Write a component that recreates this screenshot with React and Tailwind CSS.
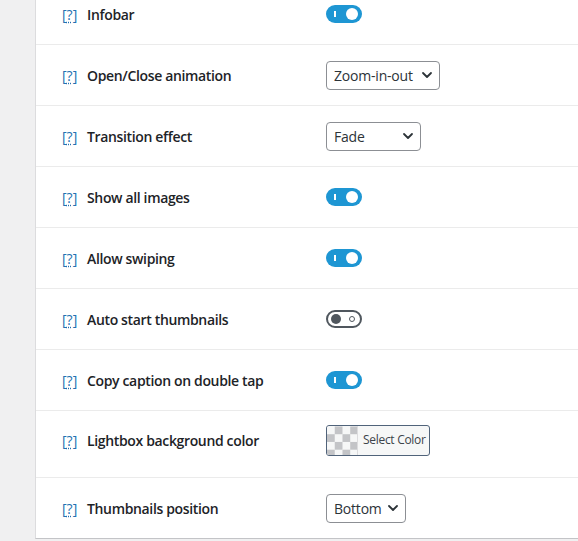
import { useState } from "react";

const font = { fontFamily: '"Open Sans", "Noto Sans", sans-serif' };

function Help() {
  return (
    <span className="text-[#2271b1] text-[14px] w-[25px] shrink-0">
      [<span className="underline decoration-dotted underline-offset-2">?</span>]
    </span>
  );
}

function Toggle({ on }) {
  if (on) {
    return (
      <div className="relative w-[36px] h-[18px] rounded-full bg-[#1e96d3]">
        <span className="absolute left-[8px] top-[6px] w-[2px] h-[6px] bg-white"></span>
        <span className="absolute right-[4px] top-[3px] w-[12px] h-[12px] rounded-full bg-white"></span>
      </div>
    );
  }
  return (
    <div className="relative w-[36px] h-[18px] rounded-full border-2 border-[#50575e] bg-white">
      <span className="absolute left-[3px] top-[2px] w-[10px] h-[10px] rounded-full bg-[#50575e]"></span>
      <span className="absolute right-[5px] top-[4px] w-[6px] h-[6px] rounded-full border border-[#50575e]"></span>
    </div>
  );
}

function Select({ value, width }) {
  return (
    <div
      className={`flex items-center justify-between h-[29px] border border-[#8c8f94] rounded-[4px] bg-white pl-[7px] pr-[6px] text-[14px] tracking-[-0.2px] text-[#2c3338] ${width}`}
    >
      <span className="whitespace-nowrap">{value}</span>
      <svg width="12" height="12" viewBox="0 0 12 12" fill="none">
        <path d="M2 4l4 4 4-4" stroke="#2c3338" strokeWidth="1.8" strokeLinecap="round" strokeLinejoin="round" />
      </svg>
    </div>
  );
}

function ColorPicker() {
  const squares = [];
  for (let r = 0; r < 4; r++) {
    for (let c = 0; c < 4; c++) {
      if ((r + c) % 2 === 1) squares.push(<rect key={`${r}-${c}`} x={c * 8} y={r * 8} width="8" height="8" fill="#c3c4c7" />);
    }
  }
  return (
    <div className="flex h-[31px] w-[104px] border border-[#50637a] rounded-[3px] overflow-hidden bg-[#f6f7f7]">
      <svg width="31" height="29" viewBox="0 0 31 29" className="shrink-0 border-r border-[#dcdcde]">
        <rect width="31" height="29" fill="#f6f7f7" />
        {squares}
      </svg>
      <span className="flex items-center pl-[5px] text-[12px] tracking-[-0.3px] whitespace-nowrap text-[#3c434a]">Select Color</span>
    </div>
  );
}

const rows = [
  { label: "Infobar", control: <Toggle on /> },
  { label: "Open/Close animation", control: <Select value="Zoom-in-out" width="w-[114px]" /> },
  { label: "Transition effect", control: <Select value="Fade" width="w-[95px]" /> },
  { label: "Show all images", control: <Toggle on /> },
  { label: "Allow swiping", control: <Toggle on /> },
  { label: "Auto start thumbnails", control: <Toggle on={false} /> },
  { label: "Copy caption on double tap", control: <Toggle on /> },
  { label: "Lightbox background color", control: <ColorPicker />, h: "h-[67px] pb-[8px]" },
  { label: "Thumbnails position", control: <Select value="Bottom" width="w-[80px]" />, h: "h-[60px]" },
];

export default function App() {
  const [active] = useState(null);

  return (
    <div className="w-full h-[541px] bg-[#f0f0f1] flex overflow-hidden" style={font}>
      <div className="w-[35px] shrink-0"></div>
      <div className="flex-1 self-start bg-white border-l border-[#dcdcde] border-b border-b-[#c3c4c7] overflow-hidden">
        <div className="-mt-[16px]">
          {rows.map((row, i) => (
            <div
              key={row.label}
              className={`flex items-center ${row.h || "h-[61px]"} ${i < rows.length - 1 ? "border-b border-[#ebebeb]" : ""}`}
            >
              <div className="flex items-center w-[290px] pl-[26px]">
                <Help />
                <span className="text-[14px] font-semibold tracking-[-0.35px] text-[#1d2327]">{row.label}</span>
              </div>
              <div className={active === i ? "opacity-80" : ""}>{row.control}</div>
            </div>
          ))}
        </div>
      </div>
    </div>
  );
}
